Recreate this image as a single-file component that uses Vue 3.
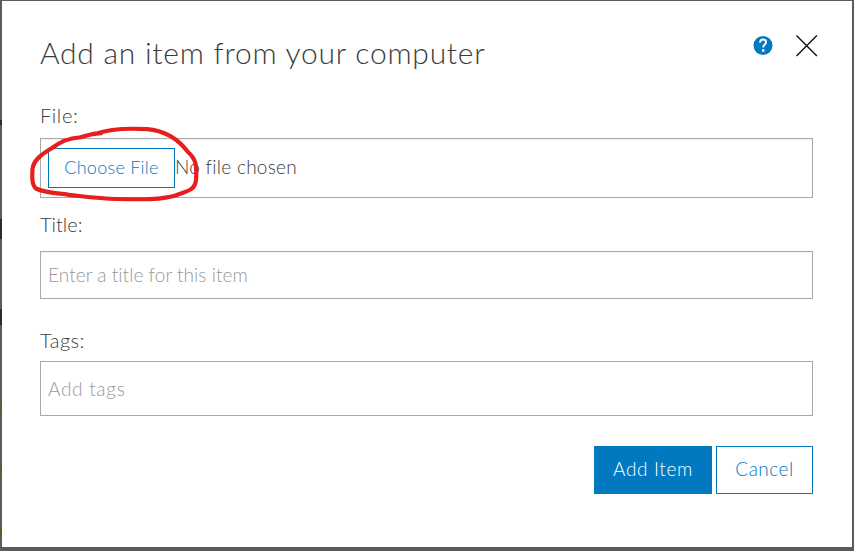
<script setup>
import { ref } from 'vue'

const title = ref('')
const tags = ref('')
</script>

<template>
  <div class="backdrop">
    <section class="dialog" role="dialog" aria-labelledby="dialog-title">
      <header class="header">
        <h1 id="dialog-title" class="heading">Add an item from your computer</h1>
        <button class="icon-button help" type="button">
          <svg width="20" height="20" viewBox="0 0 20 20">
            <circle cx="10" cy="10.500" r="9.5" fill="#0079c1" />
            <path d="M7 7.7C7.2 5.500 8.4 4.6 10.1 4.6c1.8 0 3 1 3 2.6 0 2.4-2.8 2.3-2.8 4.7v.5" fill="none" stroke="#fff" stroke-width="2" />
            <rect x="9" y="14.2" width="2.5" height="2.5" fill="#fff" />
          </svg>
        </button>
        <button class="icon-button close" type="button">
          <svg width="22" height="22" viewBox="0 0 22 22">
            <path d="M.5.5l20.4 20.4M20.9.5L.5 20.9" fill="none" stroke="#111" stroke-width="1.4" />
          </svg>
        </button>
      </header>

      <div class="label file-label">File:</div>
      <div class="file-field">
        <button class="button choose" type="button">Choose File</button>
        <span class="file-name">No file chosen</span>
        <svg class="marker" width="172" height="80" viewBox="0 0 172 80">
          <path
            d="M72 8.2C62 8.4 57 11 50 12.5C40 13 31 17 23 23C13 29 4.500 35 3.500 44C3 54 3 60 7 63.500C16 68 27 68 40 69.800C60 72 70 73.500 88 74C110 74.500 134 75 148 70C159 66 166 65 167 55C168 40 167 34 159 27C149 14 136 5.500 118 4.200C98 3 79 4.500 66 9"
            fill="none" stroke="#e81d1d" stroke-width="4.200" stroke-linecap="round" stroke-linejoin="round"
          />
        </svg>
      </div>

      <label class="label title-label" for="item-title">Title:</label>
      <input id="item-title" v-model="title" class="input title-input" placeholder="Enter a title for this item" />

      <label class="label tags-label" for="item-tags">Tags:</label>
      <input id="item-tags" v-model="tags" class="input tags-input" placeholder="Add tags" />

      <footer class="actions">
        <button class="button primary" type="button">Add Item</button>
        <button class="button cancel" type="button">Cancel</button>
      </footer>
    </section>
  </div>
</template>

<style>
body {
  margin: 0;
  overflow: hidden;
}
</style>

<style scoped>
.backdrop {
  box-sizing: border-box;
  width: 854px;
  height: 551px;
  padding: 1px 2px 4px;
  background:
    linear-gradient(#292a2c, #292a2c) 0 120px / 2px 5px no-repeat,
    linear-gradient(#71502f, #71502f) 0 170px / 2px 1px no-repeat,
    linear-gradient(#292a2e, #292a2e) 0 219px / 2px 20px no-repeat,
    linear-gradient(#292a2e, #292a2e) 0 309px / 2px 16px no-repeat,
    linear-gradient(#5e5a2e, #5e5a2e) 0 402px / 2px 9px no-repeat,
    linear-gradient(#5e5a2e, #5e5a2e) 0 465px / 2px 9px no-repeat,
    linear-gradient(#5e5a2e, #5e5a2e) 0 528px / 2px 9px no-repeat,
    #5a5b5b;
  font-family: Lato, "Open Sans", sans-serif;
  font-weight: 300;
  font-size: 19px;
  line-height: 24px;
  color: #3c3c3c;
}

.dialog {
  box-sizing: border-box;
  display: flex;
  flex-direction: column;
  height: 546px;
  padding: 33px 39px 0 38px;
  background: #fff;
}

.header {
  display: flex;
  align-items: flex-start;
  height: 69px;
}

.heading {
  flex: 1;
  margin: 0;
  font-size: 30px;
  font-weight: 300;
  line-height: 36px;
  letter-spacing: 0.75px;
  white-space: nowrap;
}

.icon-button {
  flex: none;
  padding: 0;
  border: 0;
  background: none;
  line-height: 0;
}

.help {
  margin: 1px 23px 0 0;
}

.close {
  margin: 1px -5px 0 0;
}

.label {
  display: block;
  height: 24px;
  font-size: 20px;
  letter-spacing: 0.3px;
}

.file-label {
  letter-spacing: 0.6px;
}

.title-label {
  letter-spacing: 0;
}

.tags-label {
  letter-spacing: 0.5px;
}

.file-field {
  position: relative;
  box-sizing: border-box;
  display: flex;
  align-items: flex-start;
  height: 60px;
  margin: 11px 0 14px;
  padding: 9px 7px;
  border: 1px solid #a9a9a9;
  box-shadow: inset 0 1px 2px rgba(0, 0, 0, 0.06);
}

.button {
  box-sizing: border-box;
  flex: none;
  padding: 0;
  border: 1px solid #0079c1;
  border-radius: 0;
  background: #fff;
  color: #0079c1;
  font: inherit;
  text-align: center;
  white-space: nowrap;
}

.choose {
  width: 127px;
  height: 40px;
  padding-bottom: 2px;
  font-size: 18px;
  letter-spacing: 0.27px;
}

.file-name {
  margin-top: 7px;
  letter-spacing: 0.27px;
}

.marker {
  position: absolute;
  left: -12px;
  top: -14px;
  pointer-events: none;
}

.input {
  box-sizing: border-box;
  display: block;
  width: 100%;
  margin: 0;
  padding: 0 7px;
  border: 1px solid #a9a9a9;
  border-radius: 0;
  outline: none;
  background: #fff;
  color: #3c3c3c;
  font: inherit;
}

.input::placeholder {
  color: #999;
  opacity: 1;
}

.title-input {
  height: 48px;
  margin: 15px 0 29px;
  padding-bottom: 2px;
  letter-spacing: 0.06px;
  box-shadow: inset 0 1px 2px rgba(0, 0, 0, 0.06);
}

.tags-input {
  height: 55px;
  margin: 9px 0 30px;
  letter-spacing: 0.7px;
}

.actions {
  display: flex;
  justify-content: flex-end;
  gap: 4px;
}

.primary {
  width: 118px;
  height: 48px;
  padding-bottom: 2px;
  background: #0079c1;
  color: #fff;
  letter-spacing: 0.65px;
}

.cancel {
  width: 97px;
  height: 48px;
  padding-bottom: 2px;
  letter-spacing: 0.5px;
}
</style>
